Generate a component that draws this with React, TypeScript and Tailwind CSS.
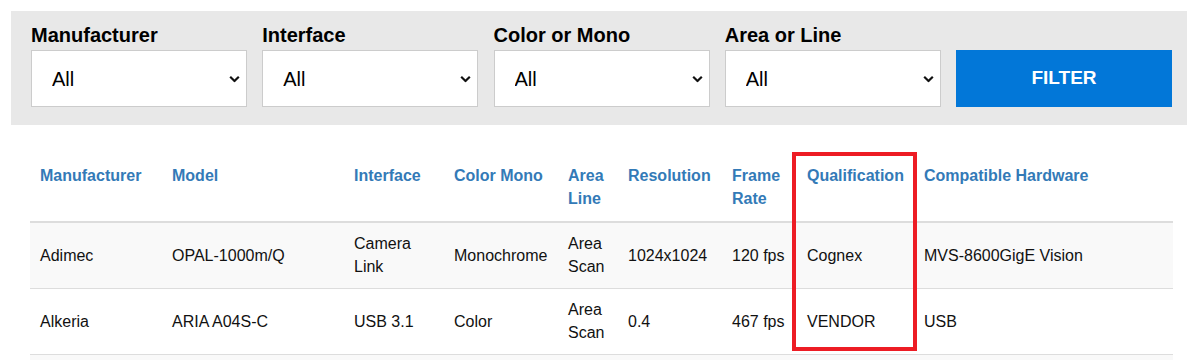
import React from "react";

const filters = ["Manufacturer", "Interface", "Color or Mono", "Area or Line"];

const columns: { label: React.ReactNode; w: string }[] = [
  { label: "Manufacturer", w: "w-[132px]" },
  { label: "Model", w: "w-[182px]" },
  { label: "Interface", w: "w-[100px]" },
  { label: "Color Mono", w: "w-[114px]" },
  { label: <>Area<br />Line</>, w: "w-[60px]" },
  { label: "Resolution", w: "w-[104px]" },
  { label: <>Frame<br />Rate</>, w: "w-[75px]" },
  { label: "Qualification", w: "w-[117px]" },
  { label: "Compatible Hardware", w: "w-[259px]" },
];

const rows: React.ReactNode[][] = [
  [
    "Adimec",
    "OPAL-1000m/Q",
    <>Camera<br />Link</>,
    "Monochrome",
    <>Area<br />Scan</>,
    "1024x1024",
    "120 fps",
    "Cognex",
    "MVS-8600GigE Vision",
  ],
  [
    "Alkeria",
    "ARIA A04S-C",
    "USB 3.1",
    "Color",
    <>Area<br />Scan</>,
    "0.4",
    "467 fps",
    "VENDOR",
    "USB",
  ],
  ["", "", "", "", "", "", "", "", ""],
];

function Chevron() {
  return (
    <svg
      className="pointer-events-none absolute right-[7px] top-1/2 -translate-y-1/2"
      width="11"
      height="7"
      viewBox="0 0 11 7"
      fill="none"
    >
      <path d="M1.2 1.2 5.5 5.5 9.8 1.2" stroke="#111" strokeWidth="2.2" />
    </svg>
  );
}

export default function App() {
  return (
    <div
      className="min-h-[360px] bg-white text-[#111] overflow-hidden"
      style={{ fontFamily: '"Liberation Sans", Arial, sans-serif' }}
    >
      {/* filter bar */}
      <div className="ml-[11px] mt-[11px] bg-[#e8e8e8] pl-[20px] pr-[15px] pt-[13px] pb-[18px]">
        <div className="grid grid-cols-[216px_216px_216px_216px_216px] gap-x-[15.25px]">
          {filters.map((f) => (
            <div key={f} className="flex flex-col">
              <label className="text-[20px] leading-[23px] font-bold text-black mb-[3px]">
                {f}
              </label>
              <div className="relative">
                <select className="appearance-none w-full h-[57px] bg-white border border-[#cccccc] pl-[20px] text-[20px] text-black outline-none">
                  <option>All</option>
                </select>
                <Chevron />
              </div>
            </div>
          ))}
          <div className="flex flex-col">
            <div className="h-[23px] mb-[3px]" />
            <button className="h-[57px] w-full bg-[#0277d8] text-white font-bold text-[19px]">
              FILTER
            </button>
          </div>
        </div>
      </div>

      {/* results table */}
      <div className="relative ml-[30px] mt-[29px] w-[1143px]">
        <table className="table-fixed w-[1143px] border-collapse text-[16px] leading-[23px]">
          <thead>
            <tr>
              {columns.map((c, i) => (
                <th
                  key={i}
                  className={`${c.w} text-left align-top font-bold text-[#337ab7] pl-[10px] pr-[4px] pt-[10px] pb-[11px] border-b-2 border-[#dddddd] whitespace-nowrap`}
                >
                  {c.label}
                </th>
              ))}
            </tr>
          </thead>
          <tbody>
            {rows.map((r, ri) => (
              <tr key={ri} className={ri % 2 === 0 ? "bg-[#f9f9f9]" : "bg-white"}>
                {r.map((cell, ci) => (
                  <td
                    key={ci}
                    className="align-middle pl-[10px] pr-[4px] pt-[9px] pb-[10px] border-t border-[#dddddd] whitespace-nowrap"
                  >
                    {cell}
                  </td>
                ))}
              </tr>
            ))}
          </tbody>
        </table>
        {/* highlight frame around the qualification column */}
        <div className="pointer-events-none absolute left-[762px] top-[-2px] w-[125px] h-[199px] border-4 border-[#ed1c24]" />
      </div>
    </div>
  );
}
